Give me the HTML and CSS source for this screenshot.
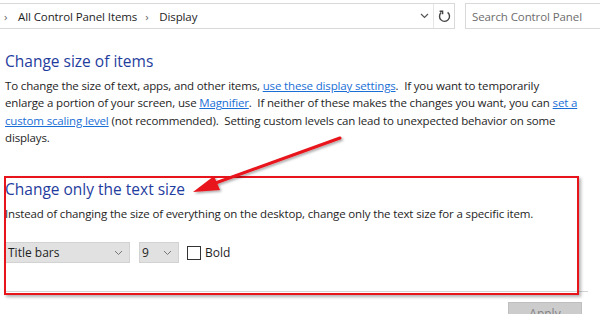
FILE: index.html
```html
<!DOCTYPE html>
<html lang="en">
  <head>
    <meta charset="UTF-8" />
    <title>Display</title>
    <link rel="stylesheet" href="styles.css">
  </head>
  <body>
    <!-- Address bar -->
    <div class="toolbar">
      <div class="address">
        <span class="crumb-sep">›</span>
        <span class="crumb">All Control Panel Items</span>
        <span class="crumb-sep">›</span>
        <span class="crumb">Display</span>
        <span class="spacer"></span>
        <span class="drop">
          <svg width="9" height="6" viewBox="0 0 9 6"><path d="M1 1 L4.5 4.5 L8 1" fill="none" stroke="#555" stroke-width="1.2"/></svg>
        </span>
        <span class="refresh">
          <svg width="13" height="14" viewBox="0 0 13 14"><path d="M3.2 3.6 A5 5 0 1 0 9.6 3.4" fill="none" stroke="#444" stroke-width="1.4"/><path d="M1.6 2.2 L4.6 2.2 L4.6 5.2" fill="none" stroke="#444" stroke-width="1.4"/></svg>
        </span>
      </div>
      <div class="search">Search Control Panel</div>
    </div>

    <div class="content">
      <h2 class="title">Change size of items</h2>
      <p class="text">
        To change the size of text, apps, and other items, <a href="#">use these display settings</a>.&nbsp; If you want to temporarily<br>
        enlarge a portion of your screen, use <a href="#">Magnifier</a>.&nbsp; If neither of these makes the changes you want, you can <a href="#">set a</a><br>
        <a href="#">custom scaling level</a> (not recommended).&nbsp; Setting custom levels can lead to unexpected behavior on some<br>
        displays.
      </p>

      <div class="textsize">
        <h2 class="title">Change only the text size</h2>
        <p class="text">Instead of changing the size of everything on the desktop, change only the text size for a specific item.</p>
        <div class="controls">
          <div class="combo combo-item">Title bars
            <svg width="9" height="6" viewBox="0 0 9 6"><path d="M1 1 L4.5 4.5 L8 1" fill="none" stroke="#777" stroke-width="1"/></svg>
          </div>
          <div class="combo combo-size">9
            <svg width="9" height="6" viewBox="0 0 9 6"><path d="M1 1 L4.5 4.5 L8 1" fill="none" stroke="#777" stroke-width="1"/></svg>
          </div>
          <label class="check"><span class="box"></span>Bold</label>
        </div>
        <div class="rule"></div>
        <div class="highlight"></div>
      </div>

      <div class="buttons">
        <button class="apply">Apply</button>
      </div>
    </div>

    <!-- Annotation arrow -->
    <svg class="arrow" width="600" height="314" viewBox="0 0 600 314">
      <defs>
        <filter id="shadow" x="-20%" y="-20%" width="140%" height="140%">
          <feDropShadow dx="1.5" dy="1.5" stdDeviation="1.2" flood-color="#000" flood-opacity="0.35"/>
        </filter>
      </defs>
      <g filter="url(#shadow)">
        <line x1="340" y1="138" x2="210" y2="185" stroke="#e8141b" stroke-width="3" stroke-linecap="round"/>
        <polygon points="193,192 214,176 220,190" fill="#e8141b"/>
      </g>
    </svg>
  </body>
</html>
```

FILE: styles.css
```css
body {
  margin: 0;
  font-family: "Open Sans", "Noto Sans", sans-serif;
  color: #1e1e1e;
  background: #fff;
  width: 600px;
  height: 314px;
  overflow: hidden;
  position: relative;
}
.toolbar {
  display: flex;
  height: 26px;
  margin-top: 3px;
  gap: 10px;
}
.address {
  flex: 1;
  display: flex;
  align-items: center;
  border-top: 1px solid #d9d9d9;
  border-bottom: 1px solid #d9d9d9;
  border-right: 1px solid #d9d9d9;
  font-size: 11.5px;
  letter-spacing: -0.1px;
}
.crumb-sep {
  color: #666;
  width: 14px;
  padding-left: 4px;
}
.crumb {
  margin-right: 4px;
}
.spacer {
  flex: 1;
}
.drop {
  width: 18px;
  height: 100%;
  display: flex;
  align-items: center;
  justify-content: center;
  border-right: 1px solid #e5e5e5;
}
.refresh {
  width: 20px;
  display: flex;
  align-items: center;
  justify-content: center;
}
.search {
  width: 128px;
  border: 1px solid #d9d9d9;
  border-right: none;
  color: #6d6d6d;
  font-size: 11.5px;
  letter-spacing: -0.1px;
  padding-left: 6px;
  display: flex;
  align-items: center;
}
.content {
  padding-left: 5px;
}
.title {
  margin: 0;
  font-weight: normal;
  font-size: 15.5px;
  line-height: 22px;
  color: #1f3d9e;
}
.content > .title {
  margin-top: 21px;
}
.text {
  margin: 5px 0 0;
  font-size: 11.5px;
  letter-spacing: -0.15px;
  line-height: 17.3px;
}
.text a {
  color: #1a6fd6;
}
.textsize {
  position: relative;
  margin-top: 31px;
  padding-top: 1px;
}
.textsize .text {
  margin-top: 5px;
}
.controls {
  display: flex;
  align-items: center;
  margin-top: 20px;
  height: 21px;
}
.combo {
  height: 21px;
  box-sizing: border-box;
  background: #e1e1e1;
  border: 1px solid #d2d2d2;
  font-size: 12px;
  display: flex;
  align-items: center;
  justify-content: space-between;
  padding: 0 6px 0 2px;
}
.combo-item {
  width: 125px;
}
.combo-size {
  width: 40px;
  margin-left: 9px;
}
.check {
  display: flex;
  align-items: center;
  margin-left: 8px;
  font-size: 12px;
}
.box {
  width: 12px;
  height: 12px;
  border: 1px solid #333;
  background: #fff;
  margin-right: 4px;
}
.rule {
  margin-top: 28px;
  width: 583px;
  height: 1px;
  background: #d4d4d4;
}
.highlight {
  position: absolute;
  left: -1px;
  top: -1px;
  width: 571px;
  height: 115px;
  border: 2px solid #e8141b;
  box-shadow: 2px 2px 3px rgba(0, 0, 0, 0.3);
}
.buttons {
  display: flex;
  justify-content: flex-end;
  padding-right: 18px;
  margin-top: 10px;
}
.apply {
  width: 74px;
  height: 23px;
  background: #cccccc;
  border: 1px solid #bfbfbf;
  color: #838383;
  font-family: inherit;
  font-size: 12px;
}
.arrow {
  position: absolute;
  left: 0;
  top: 0;
  pointer-events: none;
}
```
